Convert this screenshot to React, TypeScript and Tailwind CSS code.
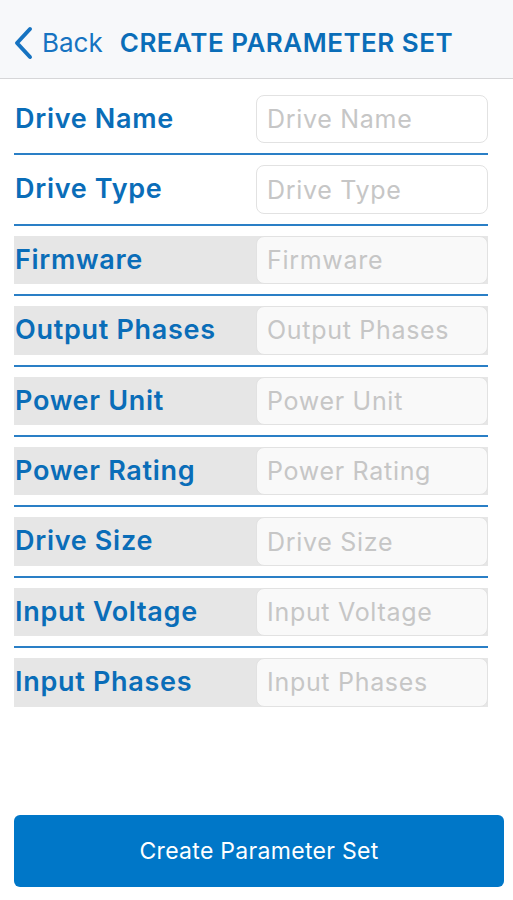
import React from 'react'

const fields = [
  'Drive Name',
  'Drive Type',
  'Firmware',
  'Output Phases',
  'Power Unit',
  'Power Rating',
  'Drive Size',
  'Input Voltage',
  'Input Phases',
]

function FieldRow({ label, shaded }: { label: string; shaded: boolean }) {
  return (
    <div
      className={`flex items-center h-[48.4px] ${shaded ? 'bg-[#e6e6e6]' : 'bg-white'}`}
    >
      <div className="flex-1 pl-px text-[27px] font-semibold text-[#0a6db8] tracking-[0.7px]">
        {label}
      </div>
      <input
        placeholder={label}
        className={`w-[232px] h-full rounded-[8px] border border-[#e2e2e2] pl-[10px] text-[25px] tracking-[0.7px] text-[#333] placeholder-[#c6c6c6] outline-none ${
          shaded ? 'bg-[#f9f9f9]' : 'bg-white'
        }`}
      />
    </div>
  )
}

export default function App() {
  return (
    <div className="flex flex-col h-[900px] bg-white font-['Inter',sans-serif]">
      <header className="flex items-center h-[79px] bg-[#f7f8fa] border-b border-[#d6d6d8] pl-[13px] pt-[7px]">
        <svg width="22" height="34" viewBox="0 0 22 34">
          <polyline
            points="17,3 4,17 17,31"
            fill="none"
            stroke="#1673c1"
            strokeWidth="4"
            strokeLinecap="round"
            strokeLinejoin="round"
          />
        </svg>
        <span className="ml-[7px] text-[26px] text-[#1673c1]">Back</span>
        <h1 className="ml-[17px] text-[26px] font-semibold text-[#0a6db8] tracking-[0.5px]">
          CREATE PARAMETER SET
        </h1>
      </header>

      <div className="pl-[14px] pr-[25px] pt-[16px]">
        {fields.map((f, i) => (
          <div key={f}>
            <FieldRow label={f} shaded={i >= 2} />
            {i < fields.length - 1 && (
              <div className="my-[10px] h-[2px] bg-[#2a7fc6]" />
            )}
          </div>
        ))}
      </div>

      <div className="mt-auto px-[14px] pr-[9px] pb-[13px]">
        <button className="w-full h-[72px] rounded-[6px] bg-[#0077c8] text-white text-[23px] tracking-[0.3px]">
          Create Parameter Set
        </button>
      </div>
    </div>
  )
}
